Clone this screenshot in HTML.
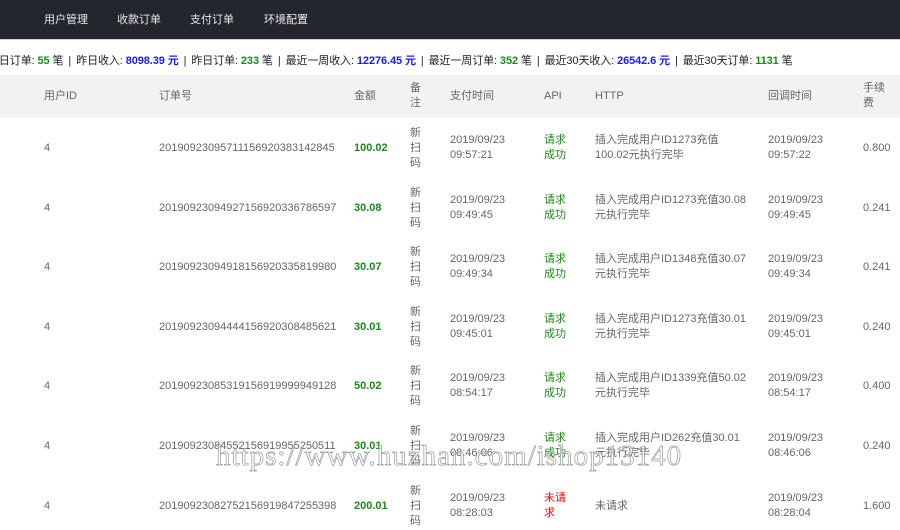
<!DOCTYPE html>
<html><head><meta charset="utf-8"><style>
*{margin:0;padding:0;box-sizing:border-box}
body{width:900px;height:530px;overflow:hidden;background:#fff;font-family:"Liberation Sans","Noto Sans CJK SC",sans-serif;font-size:11px;color:#666;position:relative}
.nav{position:absolute;left:0;top:0;width:900px;height:40px;background:#24262d;border-bottom:1px solid #ccc}
.nav span{position:absolute;top:11px;color:#e8e8e8;font-size:11px}
.stats{position:absolute;left:-12px;top:52px;white-space:nowrap;color:#222;font-size:11px;letter-spacing:-0.1px}
.stats b.g{color:#1a8a1a}.stats b.b{color:#1a1aff}
.stats i{font-style:normal;margin:0 5px}
.hd{position:absolute;left:0;top:75px;width:900px;height:43px;background:#f2f2f2}
.c{position:absolute;line-height:15px;white-space:nowrap}
.g{color:#1a8a1a}.amt{color:#1a8a1a;font-weight:bold}.r{color:#f00}
.wm{position:absolute;left:216px;top:440px;font-family:"Liberation Serif",serif;font-size:29px;color:rgba(255,255,255,.6);-webkit-text-stroke:0.7px #999;letter-spacing:1px;white-space:nowrap}
</style></head><body>
<div class="nav"><span style="left:44px">用户管理</span><span style="left:117px">收款订单</span><span style="left:190px">支付订单</span><span style="left:264px">环境配置</span></div>
<div class="stats">今日订单: <b class="g">55</b> 笔<i>|</i>昨日收入: <b class="b">8098.39 元</b><i>|</i>昨日订单: <b class="g">233</b> 笔<i>|</i>最近一周收入: <b class="b">12276.45 元</b><i>|</i>最近一周订单: <b class="g">352</b> 笔<i>|</i>最近30天收入: <b class="b">26542.6 元</b><i>|</i>最近30天订单: <b class="g">1131</b> 笔</div>
<div class="hd">
<div class="c" style="left:44px;top:14px">用户ID</div>
<div class="c" style="left:159px;top:14px">订单号</div>
<div class="c" style="left:354px;top:14px">金额</div>
<div class="c" style="left:410px;top:6px">备<br>注</div>
<div class="c" style="left:450px;top:14px">支付时间</div>
<div class="c" style="left:544px;top:14px">API</div>
<div class="c" style="left:595px;top:14px">HTTP</div>
<div class="c" style="left:768px;top:14px">回调时间</div>
<div class="c" style="left:863px;top:6px">手续<br>费</div>
</div>
<div id="rows"></div>
<script>
var d=[["20190923095711156920383142845","100.02","09:57:21",0,"插入完成用户ID1273充值<br>100.02元执行完毕","09:57:22","0.800"],
["20190923094927156920336786597","30.08","09:49:45",0,"插入完成用户ID1273充值30.08<br>元执行完毕","09:49:45","0.241"],
["20190923094918156920335819980","30.07","09:49:34",0,"插入完成用户ID1348充值30.07<br>元执行完毕","09:49:34","0.241"],
["20190923094444156920308485621","30.01","09:45:01",0,"插入完成用户ID1273充值30.01<br>元执行完毕","09:45:01","0.240"],
["20190923085319156919999949128","50.02","08:54:17",0,"插入完成用户ID1339充值50.02<br>元执行完毕","08:54:17","0.400"],
["20190923084552156919955250511","30.01","08:46:06",0,"插入完成用户ID262充值30.01<br>元执行完毕","08:46:06","0.240"],
["20190923082752156919847255398","200.01","08:28:03",1,"未请求","08:28:04","1.600"]];
var h="";
d.forEach(function(r,i){var y=Math.round(148+59.6*i);
h+='<div class="c" style="left:44px;top:'+(y-7)+'px">4</div>';
h+='<div class="c" style="left:159px;top:'+(y-7)+'px">'+r[0]+'</div>';
h+='<div class="c amt" style="left:354px;top:'+(y-7)+'px">'+r[1]+'</div>';
h+='<div class="c" style="left:410px;top:'+(y-22)+'px">新<br>扫<br>码</div>';
h+='<div class="c" style="left:450px;top:'+(y-15)+'px">2019/09/23<br>'+r[2]+'</div>';
h+='<div class="c '+(r[3]?'r':'g')+'" style="left:544px;top:'+(y-15)+'px">'+(r[3]?'未请<br>求':'请求<br>成功')+'</div>';
h+='<div class="c" style="left:595px;top:'+(r[3]?y-7:y-15)+'px">'+r[4]+'</div>';
h+='<div class="c" style="left:768px;top:'+(y-15)+'px">2019/09/23<br>'+r[5]+'</div>';
h+='<div class="c" style="left:863px;top:'+(y-7)+'px">'+r[6]+'</div>';});
document.getElementById("rows").innerHTML=h;
</script>
<div class="wm">https://www.huzhan.com/ishop13140</div>
</body></html>
